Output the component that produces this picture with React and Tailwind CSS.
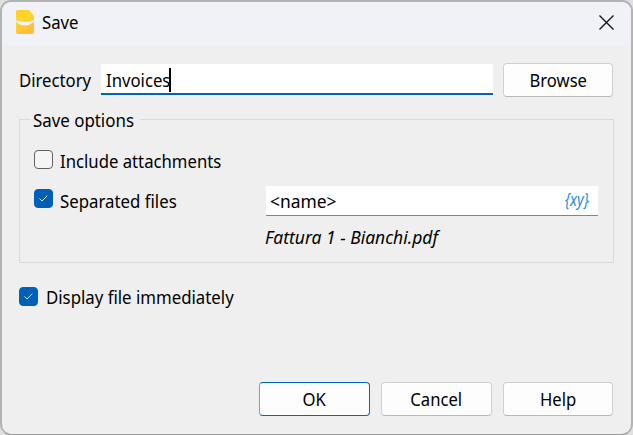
import React from "react";

function Label({ children, className = "", scale = "scale-x-[0.955]" }) {
  return (
    <span className={`block origin-left whitespace-nowrap leading-6 ${scale} ${className}`}>
      {children}
    </span>
  );
}

function Checkbox({ checked }) {
  return (
    <span
      className={`flex h-[19px] w-[19px] shrink-0 items-center justify-center rounded border ${
        checked ? "border-[#005fb8] bg-[#005fb8]" : "border-[#626262] bg-[#f5f5f5]"
      }`}
    >
      {checked && (
        <svg width="9" height="7" viewBox="0 0 9 7" fill="none" stroke="#e4effa" strokeWidth="1">
          <path d="M0.5 3.5 L3 6 L8.3 0.7" />
        </svg>
      )}
    </span>
  );
}

function Button({ children, primary }) {
  return (
    <button
      className={`flex h-[34px] flex-1 items-center justify-center rounded border bg-[#fdfdfd] ${
        primary
          ? "border-[#0067c0] border-l-[#60a8df]"
          : "border-[#d0d0d0] border-b-[#b9b9b9]"
      }`}
    >
      <span className="block scale-x-[0.95] leading-6">{children}</span>
    </button>
  );
}

export default function App() {
  return (
    <div className="h-[435px] w-[633px] overflow-hidden bg-[#e0e0e0] font-['Noto_Sans','Open_Sans',sans-serif] text-[17.5px] text-black">
      <div className="flex h-[435px] w-[633px] flex-col overflow-hidden rounded-[11px] border-2 border-b border-[#b3b3b3] border-b-[#999999] bg-[#efefef]">
        <header className="flex h-[43px] shrink-0 items-center bg-[#f0f2f8] pb-[3px] pl-3.5 pr-[17px]">
          <svg width="18" height="24" viewBox="0 0 18 24" className="shrink-0">
            <defs>
              <linearGradient id="folder" x1="0" y1="0" x2="0.4" y2="1">
                <stop offset="0" stopColor="#fcca2c" />
                <stop offset="0.4" stopColor="#fed829" />
                <stop offset="1" stopColor="#fdbd3e" />
              </linearGradient>
            </defs>
            <path
              d="M1.5 0 H12 Q13 0 13.7 .8 L17.3 5 Q18 6 18 7 V10 Q9 14 0 10 V1.5 Q0 0 1.5 0Z M0 12 Q9 19.2 18 12 V22 Q18 24 16 24 H2 Q0 24 0 22Z"
              fill="url(#folder)"
            />
          </svg>
          <Label className="ml-2">Save</Label>
          <svg width="15" height="15" viewBox="0 0 16 16" className="ml-auto mt-px" stroke="#1b1b20" strokeWidth="1.5">
            <path d="M.5 .5 L15.5 15.5 M15.5 .5 L.5 15.5" />
          </svg>
        </header>

        <main className="flex flex-1 flex-col pl-[17px] pr-[18px] pt-[18px]">
          <div className="flex h-[34px] items-start">
            <div className="w-[82px] pt-[5px]">
              <Label>Directory</Label>
            </div>
            <div className="mt-px flex h-[31px] w-[392px] items-center border-b-2 border-[#0063b9] bg-white pl-[5px] pt-[3px]">
              <Label>Invoices</Label>
              <span className="-ml-1 h-6 w-0.5 bg-black" />
            </div>
            <div className="ml-[10px] flex w-[110px]">
              <Button>Browse</Button>
            </div>
          </div>

          <fieldset className="-mr-px mt-[9px] flex h-[157px] min-w-0 flex-col">
            <div className="flex h-[27px] items-center">
              <span className="h-px w-3 bg-[#dadada]" />
              <Label className="w-[112px] pl-0.5" scale="scale-x-[0.965]">Save options</Label>
              <span className="-ml-[3px] h-px flex-1 bg-[#dadada]" />
            </div>
            <div className="-mt-[13px] h-[143px] border-x border-b border-[#dadada] pl-3.5 pt-[30px]">
              <div className="flex h-[39px] items-start">
                <Checkbox />
                <Label className="-mt-px ml-[7px]">Include attachments</Label>
              </div>
              <div className="flex h-[39px] items-start">
                <Checkbox checked />
                <Label className="ml-[7px] w-[206px]" scale="scale-x-[0.96]">Separated files</Label>
                <div className="-mt-[3px] flex h-[30px] w-[332px] items-center border-b border-[#858585] bg-white pl-1 pr-[9px]">
                  <Label scale="scale-x-[0.995]">&lt;name&gt;</Label>
                  <span className="ml-auto origin-right scale-x-[0.8] pb-0.5 text-[18px] italic text-[#2890d8]">{"{xy}"}</span>
                </div>
              </div>
              <div className="-mt-[3px] pl-[231px]">
                <Label className="italic">
                  <span className="inline-block origin-left scale-x-[1.045]">Fattura 1 - Bianchi.pdf</span>
                </Label>
              </div>
            </div>
          </fieldset>

          <div className="mt-[24px] flex items-start">
            <Checkbox checked />
            <Label className="-mt-0.5 ml-2" scale="scale-x-[0.96]">Display file immediately</Label>
          </div>

          <footer className="-mr-px mb-[18px] ml-[240px] mt-auto grid grid-cols-[111px_111px_110px] gap-[11px]">
            <Button primary>OK</Button>
            <Button>Cancel</Button>
            <Button>Help</Button>
          </footer>
        </main>
      </div>
    </div>
  );
}
